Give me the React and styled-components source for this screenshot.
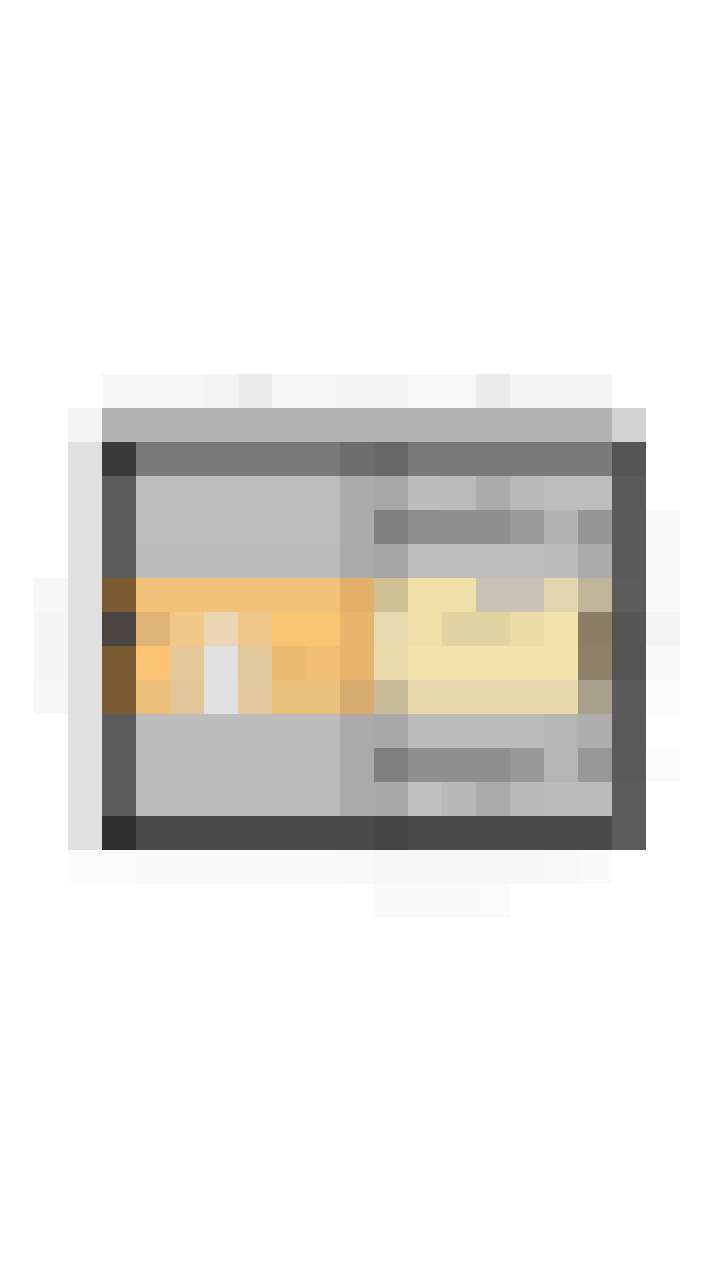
import React from 'react'
import styled, { createGlobalStyle } from 'styled-components'

const Global = createGlobalStyle`
  html, body { margin: 0; padding: 0; background: #ffffff; }
  body { font-family: "Liberation Sans", Arial, sans-serif; }
`

const Page = styled.main`
  width: 720px;
  height: 1280px;
  overflow: hidden;
  background: #ffffff;
`

const Art = styled.svg`
  display: block;
  width: 720px;
  height: 1280px;
  shape-rendering: crispEdges;
`

const CELL = 34

// rows of the pixel picture, starting at grid row 11; each entry is [firstCol, colours...]
const rows = [
  [3, 'f7f7f7', 'f7f7f7', 'f7f7f7', 'f4f4f4', 'ececec', 'f6f6f6', 'f6f6f6', 'f5f5f5', 'f5f5f5', 'f8f8f8', 'f8f8f8', 'ebebeb', 'f5f5f5', 'f5f5f5', 'f5f5f5'],
  [2, 'f4f4f4', 'b3b3b3', 'b3b3b3', 'b3b3b3', 'b3b3b3', 'b3b3b3', 'b3b3b3', 'b3b3b3', 'b3b3b3', 'b3b3b3', 'b3b3b3', 'b3b3b3', 'b3b3b3', 'b3b3b3', 'b3b3b3', 'b3b3b3', 'd3d3d3'],
  [2, 'e0e0e0', '3a3a3a', '7a7a7a', '7a7a7a', '7a7a7a', '7a7a7a', '7a7a7a', '7a7a7a', '6e6e6e', '676767', '7a7a7a', '7a7a7a', '7a7a7a', '7a7a7a', '7a7a7a', '7a7a7a', '555555'],
  [2, 'e0e0e0', '5c5c5c', 'bdbdbd', 'bdbdbd', 'bdbdbd', 'bdbdbd', 'bdbdbd', 'bdbdbd', 'ababab', 'a8a8a8', 'bcbcbc', 'bbbbbb', 'ababab', 'b9b9b9', 'bdbdbd', 'bdbdbd', '5a5a5a'],
  [2, 'e0e0e0', '5c5c5c', 'bdbdbd', 'bdbdbd', 'bdbdbd', 'bdbdbd', 'bdbdbd', 'bdbdbd', 'ababab', '808080', '8f8f8f', '8f8f8f', '8f8f8f', '9a9a9a', 'b3b3b3', '959595', '5a5a5a', 'f9f9f9'],
  [2, 'e0e0e0', '5c5c5c', 'bbbbbb', 'bbbbbb', 'bbbbbb', 'bbbbbb', 'bbbbbb', 'bbbbbb', 'aaaaaa', 'a5a5a5', 'bdbdbd', 'bdbdbd', 'bdbdbd', 'bdbdbd', 'bcbcbc', 'ababab', '5a5a5a', 'f9f9f9'],
  [1, 'f7f7f7', 'e0e0e0', '7a5a30', 'f2c27a', 'f2c27a', 'f2c27a', 'f2c27a', 'f2c27a', 'f2c27a', 'e2b06a', 'cfc096', 'f0e0a8', 'f0e0a8', 'c9c2b6', 'c9c2b6', 'e2d6b0', 'bfb69a', '5c5c5c', 'fafafa'],
  [1, 'f5f5f5', 'e0e0e0', '4a4540', 'e0b477', 'efc88a', 'ebd5b5', 'ecc68a', 'fac573', 'fac573', 'e9b56c', 'e8dab0', 'f0e0a8', 'e2d4a2', 'e2d4a2', 'ebdca8', 'f3e4ae', '8a7e66', '555555', 'f4f4f4'],
  [1, 'f5f5f5', 'e0e0e0', '7a5a30', 'fac373', 'e4c89a', 'e1e1e1', 'e0c89a', 'e9b96e', 'f0be74', 'e9b56c', 'e9dbaa', 'f3e4ae', 'f3e4ae', 'f3e4ae', 'f3e4ae', 'f3e4ae', '8c8068', '555555', 'fafafa'],
  [1, 'f7f7f7', 'e0e0e0', '7a5a30', 'ecc07a', 'e2c69a', 'e1e1e1', 'e2c89c', 'e9c07c', 'e9c07c', 'd8ac70', 'c8bc98', 'e6d8ac', 'e6d8ac', 'e6d8ac', 'e6d8ac', 'e6d8ac', 'a8a08a', '5a5a5a', 'fcfcfc'],
  [2, 'e0e0e0', '5c5c5c', 'bcbcbc', 'bcbcbc', 'bcbcbc', 'bcbcbc', 'bcbcbc', 'bcbcbc', 'aaaaaa', 'a8a8a8', 'bbbbbb', 'bbbbbb', 'bbbbbb', 'bbbbbb', 'b5b5b5', 'aeaeae', '5a5a5a'],
  [2, 'e0e0e0', '5c5c5c', 'bcbcbc', 'bcbcbc', 'bcbcbc', 'bcbcbc', 'bcbcbc', 'bcbcbc', 'aaaaaa', '808080', '8f8f8f', '8f8f8f', '8f8f8f', '999999', 'b5b5b5', '989898', '5a5a5a', 'fbfbfb'],
  [2, 'e0e0e0', '5c5c5c', 'bcbcbc', 'bcbcbc', 'bcbcbc', 'bcbcbc', 'bcbcbc', 'bcbcbc', 'aaaaaa', 'a9a9a9', 'c0c0c0', 'b8b8b8', 'aaaaaa', 'b9b9b9', 'bcbcbc', 'bcbcbc', '5c5c5c'],
  [2, 'e0e0e0', '2e2e2e', '4a4a4a', '4a4a4a', '4a4a4a', '4a4a4a', '4a4a4a', '4a4a4a', '4a4a4a', '444444', '4a4a4a', '4a4a4a', '4a4a4a', '4a4a4a', '4a4a4a', '4a4a4a', '5c5c5c'],
  [2, 'fcfcfc', 'fbfbfb', 'f9f9f9', 'f9f9f9', 'f9f9f9', 'f9f9f9', 'f9f9f9', 'f9f9f9', 'f8f8f8', 'f6f6f6', 'f7f7f7', 'f7f7f7', 'f7f7f7', 'f7f7f7', 'f8f8f8', 'fafafa'],
  [11, 'fafafa', 'fafafa', 'fafafa', 'fbfbfb'],
]

const FIRST_ROW = 11

const Pixels = () => (
  <Art viewBox="0 0 720 1280" xmlns="http://www.w3.org/2000/svg">
    <rect width="720" height="1280" fill="#ffffff" />
    {rows.map(([start, ...cells], r) =>
      cells.map((c, i) => (
        <rect
          key={`${r}-${i}`}
          x={(start + i) * CELL}
          y={(FIRST_ROW + r) * CELL}
          width={CELL}
          height={CELL}
          fill={`#${c}`}
        />
      ))
    )}
  </Art>
)

export default function App() {
  return (
    <>
      <Global />
      <Page>
        <Pixels />
      </Page>
    </>
  )
}
